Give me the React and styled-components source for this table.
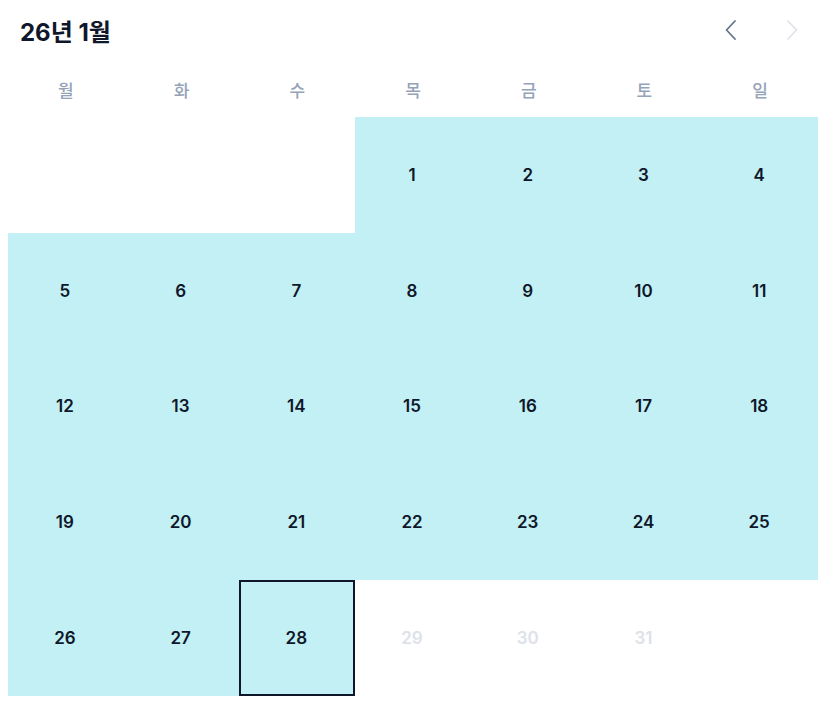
import React, { useState } from "react";
import styled, { createGlobalStyle } from "styled-components";

const GlobalStyle = createGlobalStyle`
	body {
		margin: 0;
		background: #ffffff;
		font-family: Inter, "Noto Sans CJK KR", sans-serif;
	}
`;

const CalendarWrapper = styled.div`
	width: 810px;
	padding: 0 8px;
`;

const CalendarHeader = styled.header`
	display: flex;
	justify-content: space-between;
	align-items: center;
	height: 62px;
	padding-left: 12px;
`;

const Title = styled.h2`
	margin: 0 0 2px;
	font-size: 24px;
	font-weight: 700;
	color: #0f172a;
`;

const NavButtons = styled.div`
	display: flex;
	align-items: center;
	gap: 25px;
	margin-right: 10px;
`;

const NavButton = styled.button`
	display: flex;
	align-items: center;
	justify-content: center;
	width: 34px;
	height: 34px;
	padding: 0;
	margin-bottom: 2px;
	border: none;
	background: none;
	cursor: ${(props) => (props.disabled ? "default" : "pointer")};
	color: ${(props) => (props.disabled ? "#dfe3ea" : "#64748b")};
`;

const WeekdayRow = styled.div`
	display: grid;
	grid-template-columns: repeat(7, 1fr);
	height: 55px;
	align-items: center;
`;

const Weekday = styled.span`
	text-align: center;
	font-size: 17px;
	font-weight: 500;
	color: #94a3b8;
`;

const DaysGrid = styled.div`
	display: grid;
	grid-template-columns: repeat(7, 1fr);
`;

const DayCell = styled.div`
	display: flex;
	align-items: center;
	justify-content: center;
	aspect-ratio: 1;
	box-sizing: border-box;
	padding-right: 2px;
	background: ${(props) => (props.inRange ? "#c2f0f4" : "transparent")};
	border: ${(props) => (props.isToday ? "2px solid #0f172a" : "none")};
	font-size: 17px;
	font-weight: 600;
	color: ${(props) => (props.disabled ? "#dde1e8" : "#0f172a")};
`;

const Chevron = ({ dir }) => (
	<svg width="24" height="24" viewBox="0 0 24 24" fill="none" stroke="currentColor" strokeWidth="1.8" strokeLinecap="round" strokeLinejoin="round">
		{dir === "left" ? <path d="M15 3l-8.5 9 8.5 9" /> : <path d="M9 3l8.5 9-8.5 9" />}
	</svg>
);

const WEEKDAYS = ["월", "화", "수", "목", "금", "토", "일"];
const LEADING_BLANKS = 3;
const DAYS_IN_MONTH = 31;
const TODAY = 28;

const App = () => {
	const [month] = useState({ year: 26, month: 1 });

	const cells = [];
	for (let i = 0; i < LEADING_BLANKS; i++) cells.push(null);
	for (let d = 1; d <= DAYS_IN_MONTH; d++) cells.push(d);

	return (
		<>
			<GlobalStyle />
			<CalendarWrapper>
				<CalendarHeader>
					<Title>
						{month.year}년 {month.month}월
					</Title>
					<NavButtons>
						<NavButton aria-label="이전 달">
							<Chevron dir="left" />
						</NavButton>
						<NavButton aria-label="다음 달" disabled>
							<Chevron dir="right" />
						</NavButton>
					</NavButtons>
				</CalendarHeader>
				<WeekdayRow>
					{WEEKDAYS.map((w) => (
						<Weekday key={w}>{w}</Weekday>
					))}
				</WeekdayRow>
				<DaysGrid>
					{cells.map((day, index) =>
						day === null ? (
							<DayCell key={index} />
						) : (
							<DayCell key={index} inRange={day <= TODAY} isToday={day === TODAY} disabled={day > TODAY}>
								{day}
							</DayCell>
						)
					)}
				</DaysGrid>
			</CalendarWrapper>
		</>
	);
};

export default App;
